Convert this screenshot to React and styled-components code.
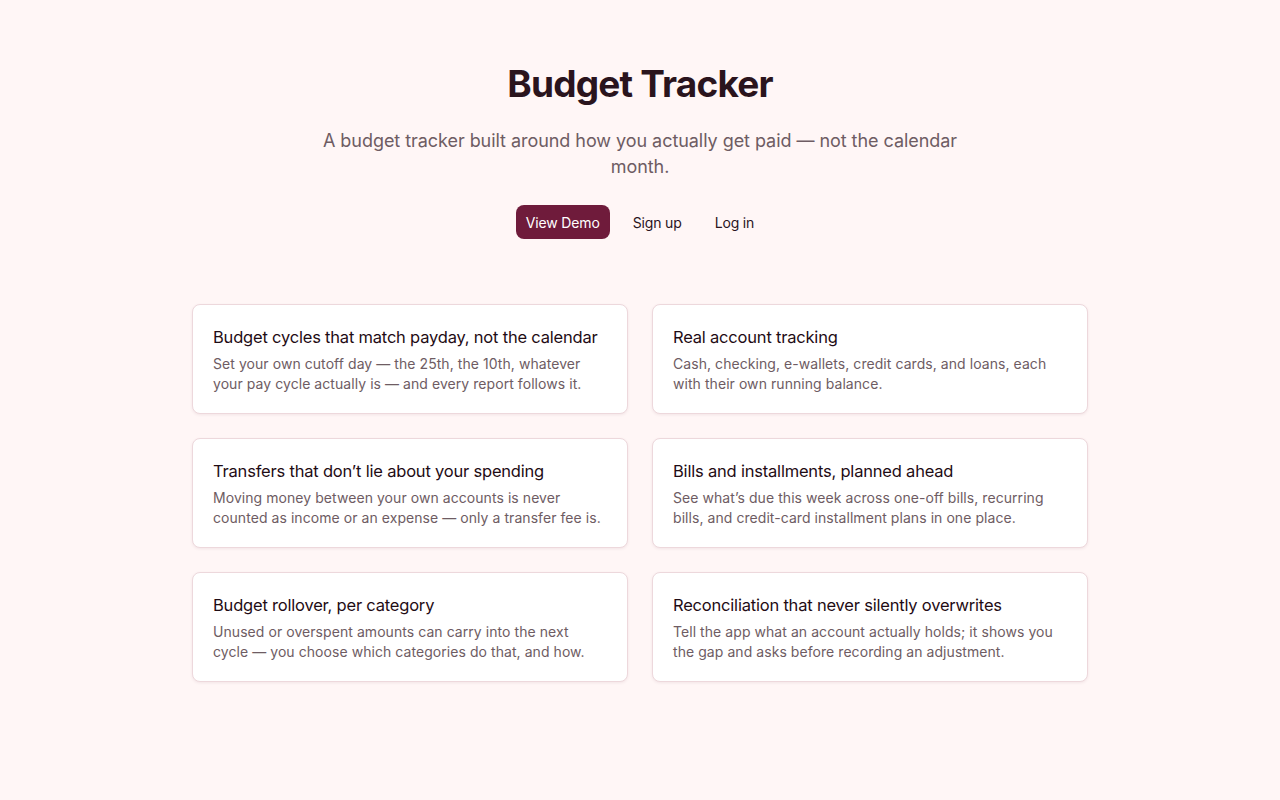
import React from "react";
import styled, { createGlobalStyle } from "styled-components";

const Global = createGlobalStyle`
  html, body { margin: 0; padding: 0; background: #fff6f6; }
  body { font-family: Inter, "Noto Sans", sans-serif; color: #2a141d; -webkit-font-smoothing: antialiased; }
  * { box-sizing: border-box; }
`;

const Page = styled.main`
  min-height: 800px;
  display: flex;
  flex-direction: column;
  align-items: center;
  padding: 60px 24px 64px;
`;

const Hero = styled.header`
  display: flex;
  flex-direction: column;
  align-items: center;
  text-align: center;
`;

const Title = styled.h1`
  margin: 0;
  font-size: 37px;
  line-height: 48px;
  font-weight: 700;
  letter-spacing: -0.8px;
  color: #2a141d;
`;

const Lead = styled.p`
  margin: 20px 0 0;
  max-width: 650px;
  font-size: 18px;
  line-height: 26px;
  color: #6e5c63;
  letter-spacing: -0.05px;
`;

const Actions = styled.div`
  display: flex;
  gap: 13px;
  margin-top: 25px;
`;

const Button = styled.a`
  display: inline-flex;
  align-items: center;
  height: 34px;
  padding: 0 10px;
  border-radius: 8px;
  font-size: 14px;
  letter-spacing: -0.15px;
  text-decoration: none;
  cursor: pointer;
  background: ${(p) => (p.$primary ? "#6f1b3b" : "transparent")};
  color: ${(p) => (p.$primary ? "#ffffff" : "#2a141d")};
`;

const Grid = styled.section`
  margin-top: 65px;
  width: 896px;
  display: grid;
  grid-template-columns: 1fr 1fr;
  gap: 24px;
`;

const Card = styled.article`
  background: #ffffff;
  border: 1px solid #edd8dc;
  border-radius: 8px;
  box-shadow: 0 1px 3px rgba(90, 30, 50, 0.08);
  padding: 20px 20px 19px;
  height: 110px;
`;

const CardTitle = styled.h3`
  margin: 0;
  font-size: 16.5px;
  line-height: 24px;
  font-weight: 400;
  letter-spacing: -0.2px;
  color: #1f0c15;
`;

const CardText = styled.p`
  margin: 5px 0 0;
  font-size: 14px;
  line-height: 20px;
  color: #6e5c63;
  letter-spacing: 0.06px;
`;

const features = [
  {
    t: "Budget cycles that match payday, not the calendar",
    d: "Set your own cutoff day — the 25th, the 10th, whatever your pay cycle actually is — and every report follows it.",
  },
  {
    t: "Real account tracking",
    d: "Cash, checking, e-wallets, credit cards, and loans, each with their own running balance.",
  },
  {
    t: "Transfers that don’t lie about your spending",
    d: "Moving money between your own accounts is never counted as income or an expense — only a transfer fee is.",
  },
  {
    t: "Bills and installments, planned ahead",
    d: "See what’s due this week across one-off bills, recurring bills, and credit-card installment plans in one place.",
  },
  {
    t: "Budget rollover, per category",
    d: "Unused or overspent amounts can carry into the next cycle — you choose which categories do that, and how.",
  },
  {
    t: "Reconciliation that never silently overwrites",
    d: "Tell the app what an account actually holds; it shows you the gap and asks before recording an adjustment.",
  },
];

export default function App() {
  return (
    <>
      <Global />
      <Page>
        <Hero>
          <Title>Budget Tracker</Title>
          <Lead>
            A budget tracker built around how you actually get paid — not the calendar month.
          </Lead>
          <Actions>
            <Button $primary>View Demo</Button>
            <Button>Sign up</Button>
            <Button>Log in</Button>
          </Actions>
        </Hero>
        <Grid>
          {features.map((f) => (
            <Card key={f.t}>
              <CardTitle>{f.t}</CardTitle>
              <CardText>{f.d}</CardText>
            </Card>
          ))}
        </Grid>
      </Page>
    </>
  );
}
